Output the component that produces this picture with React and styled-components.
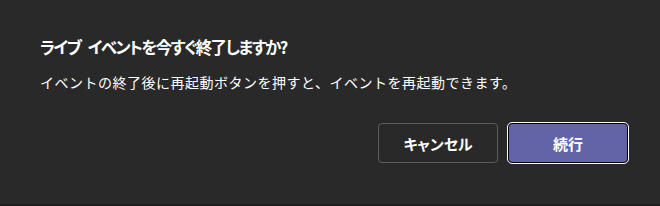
import React from 'react'
import styled, { createGlobalStyle } from 'styled-components'

const GlobalStyle = createGlobalStyle`
  html, body {
    margin: 0;
    padding: 0;
    background: #292929;
  }
`

const Dialog = styled.div`
  box-sizing: border-box;
  width: 660px;
  height: 206px;
  background: #292929;
  border-bottom: 2px solid #1f1f1f;
  padding: 34px 32px 0 40px;
  font-family: "Noto Sans CJK JP", "Noto Sans", sans-serif;
  color: #ffffff;
  display: flex;
  flex-direction: column;
`

const Title = styled.h2`
  margin: 0;
  font-size: 16.5px;
  font-weight: 700;
  line-height: 26px;
  font-feature-settings: "palt";
  letter-spacing: -1.55px;
  word-spacing: 5px;
`

const Message = styled.p`
  margin: 12px 0 0;
  font-size: 14px;
  font-weight: 400;
  line-height: 20px;
  letter-spacing: 0.5px;
  color: #ffffff;
`

const Actions = styled.div`
  display: flex;
  justify-content: flex-end;
  gap: 10px;
  margin-top: 31px;
`

const Button = styled.button`
  box-sizing: border-box;
  width: 120px;
  height: 40px;
  padding: 0;
  border-radius: 4px;
  font-family: inherit;
  font-feature-settings: "palt";
  font-size: 15px;
  font-weight: 700;
  color: #ffffff;
  cursor: pointer;
  background: ${p => (p.$primary ? '#6264a7' : 'transparent')};
  border: 1px solid ${p => (p.$primary ? '#000000' : '#5c5c5c')};
  outline: ${p => (p.$primary ? '1px solid #ffffff' : 'none')};
`

export default function App() {
  return (
    <>
      <GlobalStyle />
      <Dialog>
        <Title>ライブ イベントを今すぐ終了しますか?</Title>
        <Message>イベントの終了後に再起動ボタンを押すと、イベントを再起動できます。</Message>
        <Actions>
          <Button>キャンセル</Button>
          <Button $primary>続行</Button>
        </Actions>
      </Dialog>
    </>
  )
}
